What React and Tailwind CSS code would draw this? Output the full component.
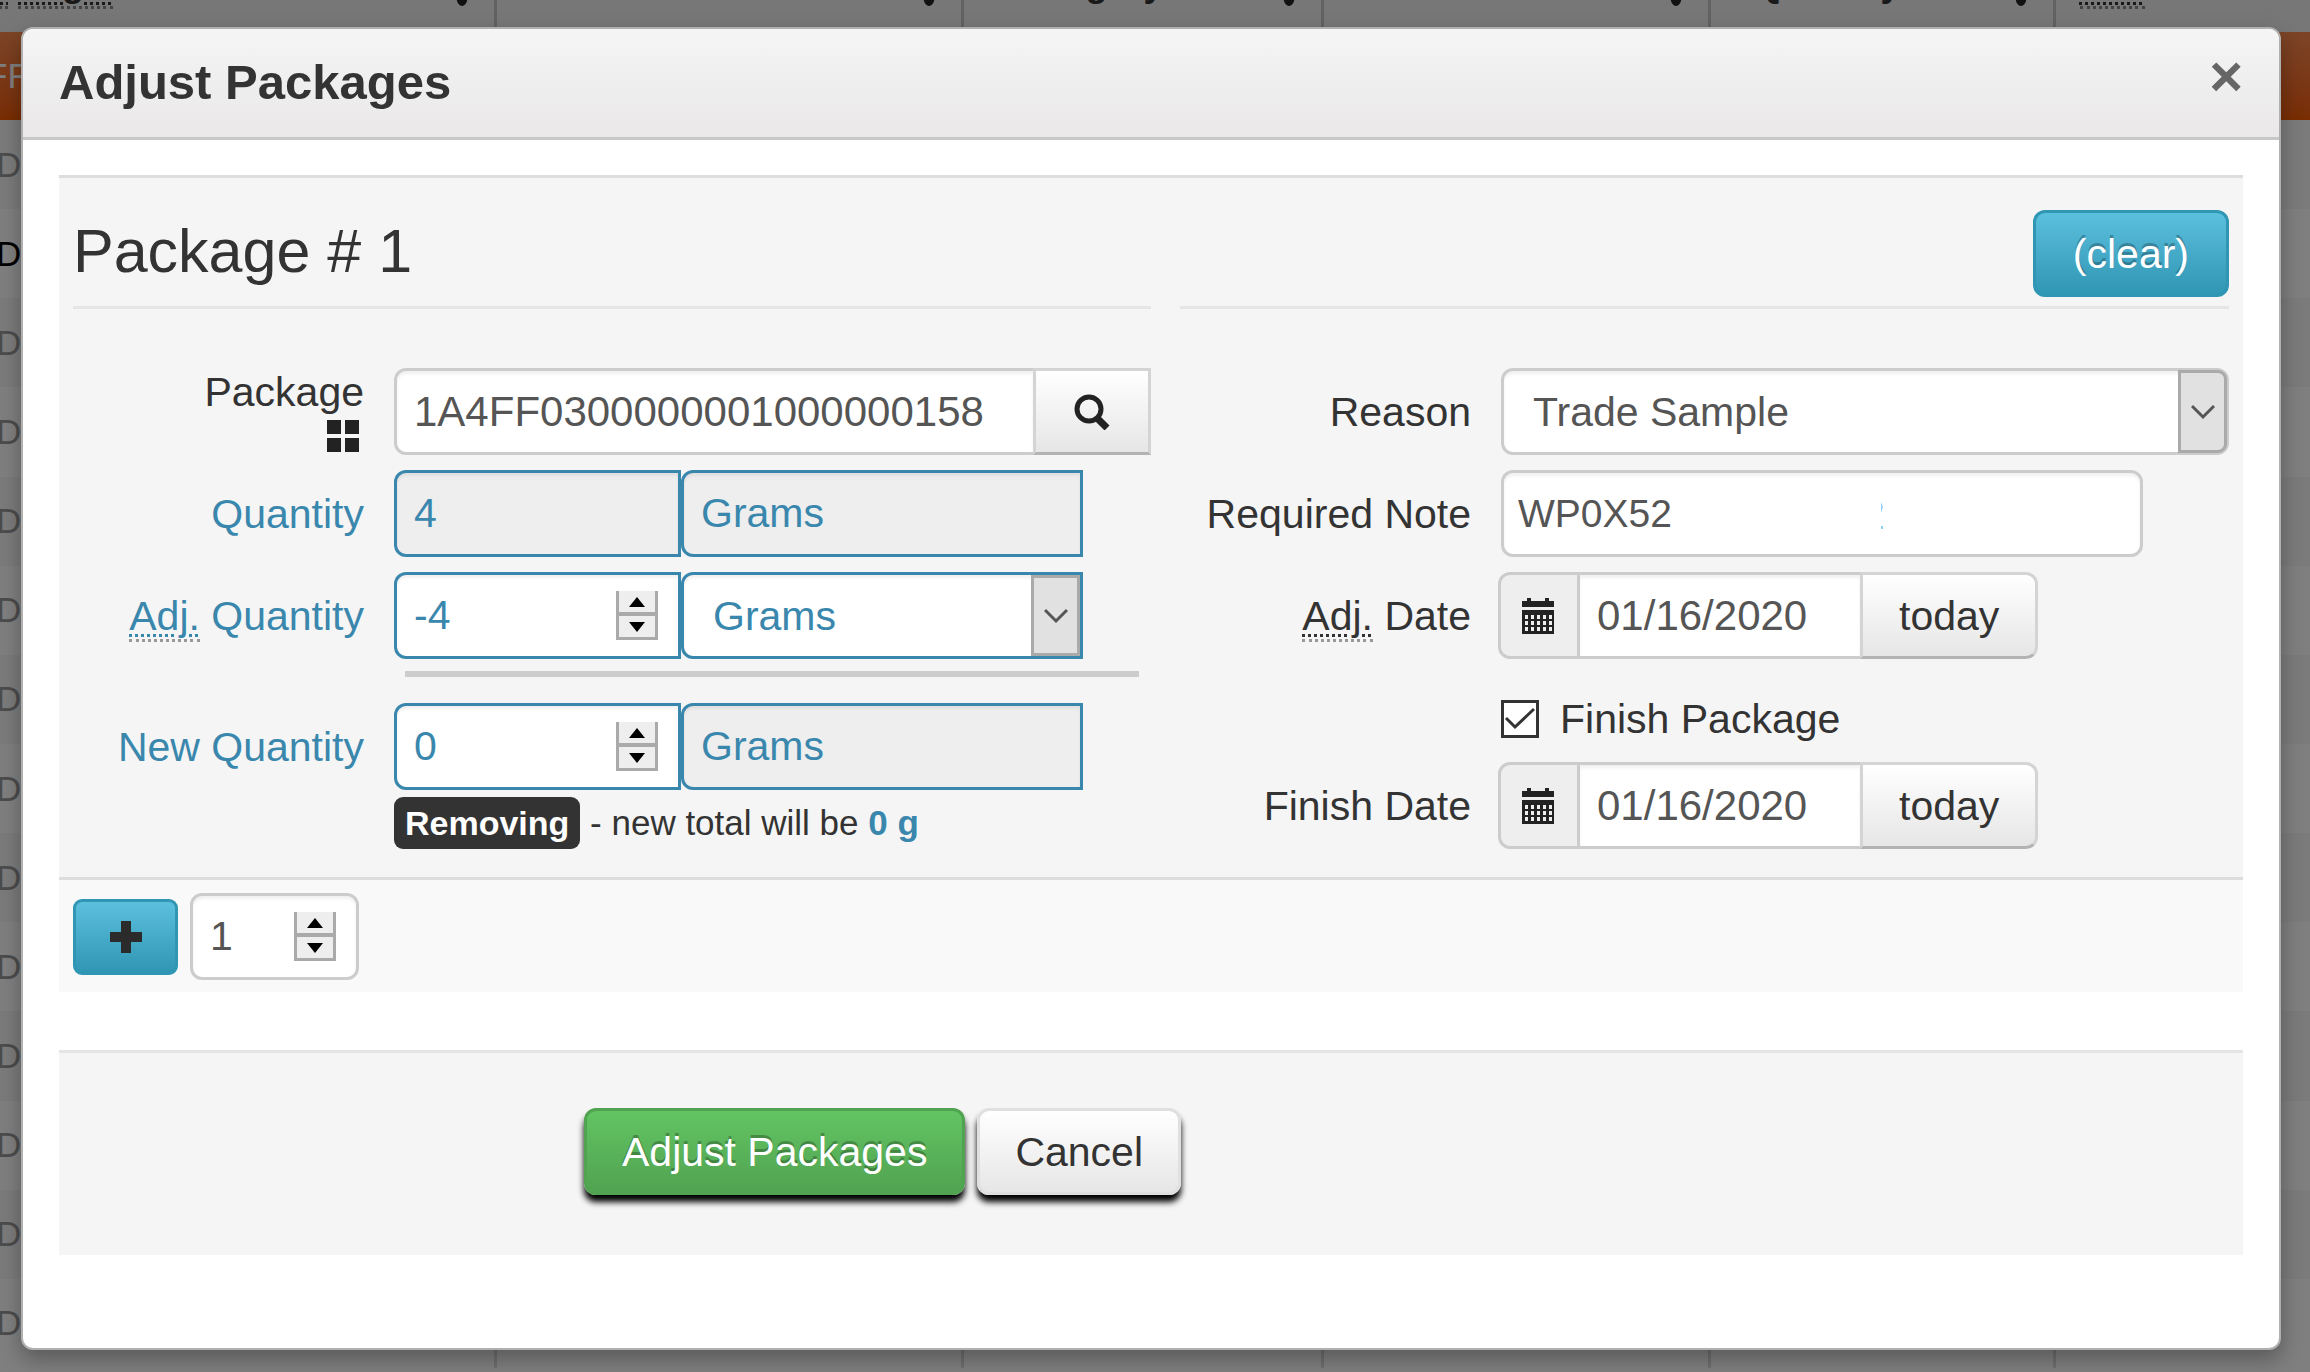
import React, { useState } from "react";

const ROWS = Array.from({ length: 14 }, (_, i) => ({ id: i, current: i === 1 }));

const FIELD = "h-[87px] min-w-0 border-[3px] leading-[48px] outline-none";
const GRAY = "border-[#ccc] text-[#555] shadow-[inset_0_3px_3px_rgba(0,0,0,0.06)]";
const BLUE = "border-[#3a87ad] text-[#3a87ad] shadow-[inset_0_3px_3px_rgba(0,0,0,0.06)]";

export default function App() {
  return (
    <div className="relative h-screen min-h-fit overflow-hidden bg-white font-['Liberation_Sans',Arial,sans-serif] text-[41px] leading-[48px] text-[#333]">
      <PackagesGrid />
      <div className="absolute inset-0 bg-black/50" />
      <AdjustModal />
    </div>
  );
}

function PackagesGrid() {
  return (
    <div className="absolute inset-0 overflow-hidden pb-1" aria-hidden="true">
      <table className="h-full w-full table-fixed border-collapse text-[35px] leading-[40px]">
        <colgroup>
          <col className="w-[495px]" />
          <col className="w-[467px]" />
          <col className="w-[360px]" />
          <col className="w-[387px]" />
          <col className="w-[345px]" />
          <col />
        </colgroup>
        <thead>
          <tr className="h-8 bg-[#eee] text-[36px]">
            <HeadCell>
              <span className="-ml-[60px]"><Dotted head>Src.</Dotted> <Dotted head>Pkg's</Dotted></span>
            </HeadCell>
            <HeadCell />
            <HeadCell><span className="pl-[44px]">Category</span></HeadCell>
            <HeadCell />
            <HeadCell><span className="pl-[44px]">Quantity</span></HeadCell>
            <HeadCell last><span className="pl-[24px]"><Dotted head>P.B.</Dotted></span></HeadCell>
          </tr>
        </thead>
        <tbody>
          <tr className="h-[88px] bg-linear-to-b from-[#f98a4d] to-[#f25a00] text-white">
            <td colSpan={6}><span className="-ml-[14px]">FF</span></td>
          </tr>
          {ROWS.map((r) => (
            <tr key={r.id} className="odd:bg-white even:bg-[#f6f6f6]">
              <td className="border-r-[3px] border-[#ddd]">
                <span className={r.current ? "-ml-[4px] text-black" : "-ml-[4px] text-[#999]"}>D</span>
              </td>
              <td className="border-r-[3px] border-[#ddd]" />
              <td className="border-r-[3px] border-[#ddd]" />
              <td className="border-r-[3px] border-[#ddd]" />
              <td className="border-r-[3px] border-[#ddd]" />
              <td />
            </tr>
          ))}
        </tbody>
      </table>
    </div>
  );
}

function HeadCell({ children, last }) {
  return (
    <th className={last ? "p-0 text-left" : "border-r-[3px] border-[#c4c4c4] p-0 text-left"}>
      <div className="-mt-[36px] flex h-[68px] items-start justify-between">
        <span>{children}</span>
        {!last && (
          <svg className="mr-[26px] h-[42px] w-3" viewBox="0 0 12 42">
            <path d="M0 30h12c0 6-2 12-6 12s-6-6-6-12z" fill="#222" />
          </svg>
        )}
      </div>
    </th>
  );
}

function Dotted({ children, head }) {
  return (
    <abbr
      className={
        head
          ? "border-b-[3px] border-dotted border-[#888] pb-[2px] underline decoration-dotted decoration-[3px] underline-offset-[6px]"
          : "border-b-[3px] border-dotted border-[#999] underline decoration-dotted decoration-[3px] underline-offset-[4px]"
      }
    >
      {children}
    </abbr>
  );
}

function AdjustModal() {
  return (
    <div
      role="dialog"
      aria-labelledby="modal-title"
      className="relative mt-[27px] mr-[29px] ml-[21px] rounded-[12px] border-2 border-[#b0b0b0] bg-white shadow-[0_9px_21px_rgba(0,0,0,0.3)]"
    >
      <div className="flex h-[111px] items-start justify-between rounded-t-[10px] border-b-[3px] border-[#c8c8c8] bg-linear-to-b from-[#f5f5f5] to-[#eae8e9] px-9 pt-[25px]">
        <h3 id="modal-title" className="text-[49px] leading-[56px] font-bold">Adjust Packages</h3>
        <button type="button" aria-label="Close" className="text-[58px] leading-[44px] font-bold text-[#666]">
          ×
        </button>
      </div>
      <form className="px-9 pt-[35px] pb-[93px]" onSubmit={(e) => e.preventDefault()}>
        <PackageSection />
        <AddMore />
        <div className="mt-[58px] flex gap-3 border-t-[3px] border-[#e5e5e5] bg-[#f5f5f5] pt-[55px] pb-[60px] pl-[525px]">
          <button
            type="submit"
            className="h-[87px] rounded-[12px] border-[3px] border-[#51a351] bg-linear-to-b from-[#62c462] to-[#51a351] px-[35px] text-white shadow-[0_7px_6px_#000] [text-shadow:0_-3px_0_rgba(0,0,0,0.25)]"
          >
            Adjust Packages
          </button>
          <button
            type="button"
            className="h-[87px] rounded-[12px] border-[3px] border-[#e0e0e0] bg-linear-to-b from-white to-[#e6e6e6] px-[35px] shadow-[0_7px_6px_#000]"
          >
            Cancel
          </button>
        </div>
      </form>
    </div>
  );
}

function PackageSection() {
  const [finish, setFinish] = useState(true);

  return (
    <div className="grid grid-cols-[1077fr_1048fr] gap-x-[29px] border-t-[3px] border-[#ddd] bg-[#f5f5f5] px-[14px] pb-[28px]">
      <div>
        <div className="mb-[59px] h-[131px] border-b-[3px] border-[#e5e5e5] pt-[36px]">
          <h4 className="text-[61px] leading-[74px]">Package # 1</h4>
        </div>
        <div className="flex flex-col gap-[15px]">
          <Row
            id="package"
            label={
              <span className="flex flex-col items-end">
                Package
                <svg className="mt-1 mr-[5px] mb-1 h-8 w-8" viewBox="0 0 32 32" fill="#222">
                  <path d="M0 0h14v14H0zM18 0h14v14H18zM0 18h14v14H0zM18 18h14v14H18z" />
                </svg>
              </span>
            }
          >
            <input
              id="package"
              defaultValue="1A4FF0300000001000000158"
              className={`${FIELD} ${GRAY} flex-1 rounded-l-[12px] bg-white px-[17px] text-[42px]`}
            />
            <button
              type="button"
              aria-label="Find package"
              className="-ml-[3px] grid h-[87px] w-[118px] place-items-center border-[3px] border-[#d4d4d4] border-b-[#b3b3b3] bg-linear-to-b from-white to-[#e6e6e6]"
            >
              <svg className="h-9 w-9" viewBox="0 0 36 36" fill="none" stroke="#222">
                <circle cx="15" cy="15" r="12" strokeWidth="5" />
                <path d="M23 24l10 10" strokeWidth="7" />
              </svg>
            </button>
          </Row>
          <Row id="quantity" label="Quantity" blue>
            <input
              id="quantity"
              readOnly
              value="4"
              className={`${FIELD} ${BLUE} w-[287px] rounded-l-[12px] bg-[#eee] px-[17px] text-[41px]`}
            />
            <UnitBox label="Quantity unit" />
          </Row>
          <Row id="adj-quantity" label={<span><Dotted>Adj.</Dotted> Quantity</span>} blue>
            <NumberBox id="adj-quantity" start={-4} className={`${BLUE} w-[287px] rounded-l-[12px]`} />
            <SelectBox label="Unit" value="Grams" className={`${BLUE} rounded-l-[12px]`} wrap="w-[402px]" />
          </Row>
        </div>
        <hr className="mt-[12px] mr-3 mb-[26px] ml-[332px] border-t-[6px] border-[#ccc]" />
        <Row id="new-quantity" label="New Quantity" blue>
          <NumberBox id="new-quantity" start={0} className={`${BLUE} w-[287px] rounded-l-[12px]`} />
          <UnitBox label="New quantity unit" />
        </Row>
        <p className="mt-[7px] ml-[321px] text-[35px] leading-[52px]">
          <span className="inline-block rounded-[9px] bg-[#333] px-[11px] text-[34px] font-bold text-white">Removing</span>
          {" - new total will be "}
          <b className="text-[#3a87ad]">0 g</b>
        </p>
      </div>

      <div>
        <div className="mb-[59px] flex h-[131px] items-start justify-end border-b-[3px] border-[#e5e5e5] pt-8">
          <button
            type="button"
            className="h-[87px] rounded-[12px] border-[3px] border-[#2f96b4] bg-linear-to-b from-[#5bc0de] to-[#2f96b4] px-[37px] text-white [text-shadow:0_-3px_0_rgba(0,0,0,0.25)]"
          >
            (clear)
          </button>
        </div>
        <div className="flex flex-col gap-[15px]">
          <Row id="reason" label="Reason">
            <SelectBox id="reason" value="Trade Sample" className={`${GRAY} rounded-[12px]`} wrap="flex-1" rounded />
          </Row>
          <Row id="note" label="Required Note">
            <div className="relative">
              <input
                id="note"
                defaultValue="WP0X52"
                className={`${FIELD} ${GRAY} w-[642px] rounded-[12px] bg-white px-[14px] text-[39px]`}
              />
              <svg className="absolute top-8 left-[380px] h-7 w-1" viewBox="0 0 4 28" fill="#8fd0fb">
                <path d="M0 0l2 5-2 6zM0 24h2v3H0z" />
              </svg>
            </div>
          </Row>
          <Row id="adj-date" label={<span><Dotted>Adj.</Dotted> Date</span>}>
            <DateBox id="adj-date" />
          </Row>
        </div>
        <label className="mt-[36px] mb-[19px] ml-[321px] flex w-fit items-center gap-[21px]">
          <span className="relative h-[38px] w-[38px]">
            <input
              type="checkbox"
              checked={finish}
              onChange={(e) => setFinish(e.target.checked)}
              className="block h-[38px] w-[38px] appearance-none border-[3px] border-[#333] bg-white"
            />
            {finish && (
              <svg className="pointer-events-none absolute inset-0" viewBox="0 0 38 38" fill="none" stroke="#333" strokeWidth="3">
                <path d="M5 18l9 9L33 9" />
              </svg>
            )}
          </span>
          Finish Package
        </label>
        <Row id="finish-date" label="Finish Date">
          <DateBox id="finish-date" />
        </Row>
      </div>
    </div>
  );
}

function Row({ id, label, blue, children }) {
  return (
    <div className="flex h-[87px] items-center gap-[30px]">
      <label
        htmlFor={id}
        className={blue ? "w-[291px] shrink-0 text-right text-[#3a87ad]" : "w-[291px] shrink-0 text-right"}
      >
        {label}
      </label>
      <div className="flex min-w-0 flex-1">{children}</div>
    </div>
  );
}

function UnitBox({ label }) {
  return (
    <input
      aria-label={label}
      readOnly
      value="Grams"
      className={`${FIELD} ${BLUE} w-[402px] rounded-l-[12px] bg-[#eee] px-[17px] text-[41px]`}
    />
  );
}

function NumberBox({ id, label, start, className }) {
  const [value, setValue] = useState(start);
  const step = (n) => setValue((v) => Number(v) + n);

  return (
    <div className="relative">
      <input
        id={id}
        aria-label={label}
        value={value}
        onChange={(e) => setValue(e.target.value)}
        className={`${FIELD} bg-white px-[17px] text-[41px] ${className}`}
      />
      <div className="absolute top-[19px] right-[23px] flex h-[49px] w-[42px] flex-col border-x-[3px] border-b-[3px] border-[#aaa] bg-[#eee]">
        <button
          type="button"
          aria-label="Increase"
          onClick={() => step(1)}
          className="grid flex-1 place-items-center border-b-4 border-[#aaa]"
        >
          <svg className="h-[10px] w-4" viewBox="0 0 16 10"><path d="M8 0l8 10H0z" /></svg>
        </button>
        <button type="button" aria-label="Decrease" onClick={() => step(-1)} className="grid flex-1 place-items-center">
          <svg className="h-[10px] w-4" viewBox="0 0 16 10"><path d="M8 10L0 0h16z" /></svg>
        </button>
      </div>
    </div>
  );
}

function SelectBox({ id, label, value, className, wrap, rounded }) {
  return (
    <div className={`relative ${wrap}`}>
      <select
        id={id}
        aria-label={label}
        className={`h-[87px] w-full appearance-none border-[3px] bg-white pl-[29px] text-[41px] outline-none ${className}`}
      >
        <option>{value}</option>
      </select>
      <span
        className={
          rounded
            ? "pointer-events-none absolute top-[2px] right-[2px] bottom-[2px] grid w-[49px] place-items-center rounded-r-[9px] border-[3px] border-[#aaa] bg-[#e1e1e1]"
            : "pointer-events-none absolute top-[3px] right-[3px] bottom-[3px] grid w-[49px] place-items-center border-[3px] border-[#aaa] bg-[#e1e1e1]"
        }
      >
        <svg className="h-4 w-6" viewBox="0 0 24 16" fill="none" stroke="#555" strokeWidth="3">
          <path d="M1 2l11 11L23 2" />
        </svg>
      </span>
    </div>
  );
}

function DateBox({ id }) {
  const [date, setDate] = useState("01/16/2020");

  return (
    <div className="-ml-[3px] flex">
      <span className="grid h-[87px] w-[82px] place-items-center rounded-l-[12px] border-[3px] border-[#ccc] bg-[#eee] pr-[2px]">
        <svg className="h-9 w-8" viewBox="0 0 32 36" fill="#222">
          <path d="M0 3h5V0h4v3h14V0h4v3h5v6H0z" />
          <path
            fillRule="evenodd"
            d="M0 12h32v24H0zM3 17v4h3v-4zM9 17v4h3v-4zM15 17v4h3v-4zM21 17v4h3v-4zM27 17v4h3v-4zM3 23v4h3v-4zM9 23v4h3v-4zM15 23v4h3v-4zM21 23v4h3v-4zM27 23v4h3v-4zM3 29v4h3v-4zM9 29v4h3v-4zM15 29v4h3v-4zM21 29v4h3v-4zM27 29v4h3v-4z"
          />
        </svg>
      </span>
      <input
        id={id}
        value={date}
        onChange={(e) => setDate(e.target.value)}
        className={`${FIELD} ${GRAY} -ml-[3px] w-[286px] bg-white px-[17px] text-[42px]`}
      />
      <button
        type="button"
        onClick={() => setDate("01/16/2020")}
        className="-ml-[3px] h-[87px] rounded-r-[12px] border-[3px] border-[#d4d4d4] border-b-[#b3b3b3] bg-linear-to-b from-white to-[#e6e6e6] px-9"
      >
        today
      </button>
    </div>
  );
}

function AddMore() {
  return (
    <div className="flex items-center gap-3 border-t-[3px] border-[#ddd] bg-[#f9f9f9] px-[14px] pt-[13px] pb-3">
      <button
        type="button"
        aria-label="Add packages"
        className="grid h-[76px] w-[105px] place-items-center rounded-[9px] border-[3px] border-[#2f96b4] bg-linear-to-b from-[#5bc0de] to-[#2f96b4]"
      >
        <svg className="h-8 w-8" viewBox="0 0 32 32" fill="#2b2b2b">
          <path d="M11 0h10v11h11v10H21v11H11V21H0V11h11z" />
        </svg>
      </button>
      <NumberBox label="Packages to add" start={1} className={`${GRAY} w-[169px] rounded-[12px]`} />
    </div>
  );
}
